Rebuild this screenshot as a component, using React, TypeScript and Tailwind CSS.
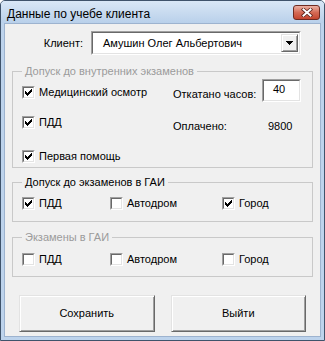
import type { ReactNode } from 'react'

// classic 7x7 tick, pixel by pixel
const TICK: [number, number][] = [
  [6, 0],
  [5, 1], [6, 1],
  [0, 2], [4, 2], [5, 2], [6, 2],
  [0, 3], [1, 3], [3, 3], [4, 3], [5, 3],
  [0, 4], [1, 4], [2, 4], [3, 4], [4, 4],
  [1, 5], [2, 5], [3, 5],
  [2, 6],
]

function Tick() {
  return (
    <svg width="7" height="7" viewBox="0 0 7 7" shapeRendering="crispEdges">
      {TICK.map(([x, y]) => (
        <rect key={`${x}-${y}`} x={x} y={y} width="1" height="1" fill="#000" />
      ))}
    </svg>
  )
}

function Check({ checked, label }: { checked?: boolean; label: string }) {
  return (
    <label className="flex items-center gap-[4px] h-[14px] leading-[14px]">
      <span className="w-[13px] h-[13px] shrink-0 border border-t-[#a0a0a0] border-l-[#a0a0a0] border-r-white border-b-white">
        <span className="flex items-center justify-center w-full h-full bg-white border border-t-[#696969] border-l-[#696969] border-r-[#e3e3e3] border-b-[#e3e3e3]">
          {checked && <Tick />}
        </span>
      </span>
      <span>{label}</span>
    </label>
  )
}

function Group({
  title,
  disabled,
  className,
  children,
}: {
  title: string
  disabled?: boolean
  className?: string
  children: ReactNode
}) {
  return (
    <fieldset className={`mx-[7px] border border-[#c9c9c9] ${className ?? ''}`}>
      <legend className={`ml-[9px] px-[3px] leading-[15px] ${disabled ? 'text-[#9b9b9b]' : 'text-black'}`}>
        {title}
      </legend>
      {children}
    </fieldset>
  )
}

function Button({ children }: { children: ReactNode }) {
  return (
    <button className="w-[136px] h-[37px] bg-[#f0f0f0] border border-t-[#e3e3e3] border-l-[#e3e3e3] border-r-[#696969] border-b-[#696969] shadow-[inset_1px_1px_#fff,inset_-1px_-1px_#a0a0a0]">
      {children}
    </button>
  )
}

export default function App() {
  return (
    <div className="w-[325px] h-[341px] flex flex-col overflow-hidden rounded-t-[5px] border border-[#3f536b] bg-[#bdd3ec] font-['Liberation_Sans',Arial,sans-serif] text-[11px] text-black">
      {/* Title bar */}
      <div className="h-[22px] shrink-0 flex items-start justify-between bg-gradient-to-b from-[#d9e7f6] to-[#b9d0ea]">
        <span className="ml-[6px] mt-[6px] text-[12px] leading-[15px]">Данные по учебе клиента</span>
        <button className="mt-[4px] mr-[4px] w-[27px] h-[15px] flex items-center justify-center rounded-[3px] border border-[#6e2b21] bg-gradient-to-b from-[#eab0a3] via-[#d46a55] to-[#c4452e]">
          <svg width="12" height="9" viewBox="0 0 12 9">
            <path d="M2.5 1.5L9.5 7.5M9.5 1.5L2.5 7.5" stroke="#5a2219" strokeWidth="3.6" strokeLinecap="square" />
            <path d="M2.5 1.5L9.5 7.5M9.5 1.5L2.5 7.5" stroke="#fff" strokeWidth="2" strokeLinecap="square" />
          </svg>
        </button>
      </div>

      {/* Client area */}
      <div className="flex-1 mx-[3px] mb-[3px] flex flex-col bg-[#f0f0f0] border border-[#9db3cf]">
        {/* Client combo */}
        <div className="mt-[7px] flex items-center">
          <span className="w-[86px] pr-[8px] text-right">Клиент:</span>
          <div className="w-[210px] h-[24px] flex items-center border border-t-[#a0a0a0] border-l-[#a0a0a0] border-r-white border-b-white">
            <div className="flex-1 h-full flex items-center bg-white border border-t-[#696969] border-l-[#696969] border-r-[#e3e3e3] border-b-[#e3e3e3]">
              <span className="flex-1 pl-[10px]">Амушин Олег Альбертович</span>
              <span className="mr-[1px] w-[17px] h-[18px] flex items-center justify-center bg-[#f0f0f0] border border-t-[#e3e3e3] border-l-[#e3e3e3] border-r-[#696969] border-b-[#696969] shadow-[inset_1px_1px_#fff,inset_-1px_-1px_#a0a0a0]">
                <svg width="7" height="4" viewBox="0 0 7 4" shapeRendering="crispEdges">
                  <path d="M0 0h7L3.5 4z" fill="#000" />
                </svg>
              </span>
            </div>
          </div>
        </div>

        {/* Internal exams */}
        <Group title="Допуск до внутренних экзаменов" disabled className="mt-[9px]">
          <div className="flex">
            <div className="w-[160px] pl-[9px] pt-[6px] pb-[4px] flex flex-col">
              <Check checked label="Медицинский осмотр" />
              <div className="mt-[16px]">
                <Check checked label="ПДД" />
              </div>
              <div className="mt-[20px]">
                <Check checked label="Первая помощь" />
              </div>
            </div>
            <div className="flex flex-col">
              <div className="flex items-start">
                <span className="w-[89px] mt-[8px] leading-[14px]">Откатано часов:</span>
                <div className="w-[39px] h-[23px] border border-t-[#a0a0a0] border-l-[#a0a0a0] border-r-white border-b-white">
                  <div className="h-full flex items-center pl-[9px] pb-[2px] bg-white border border-t-[#696969] border-l-[#696969] border-r-[#e3e3e3] border-b-[#e3e3e3]">
                    40
                  </div>
                </div>
              </div>
              <div className="mt-[17px] flex leading-[14px]">
                <span className="w-[95px]">Оплачено:</span>
                <span>9800</span>
              </div>
            </div>
          </div>
        </Group>

        {/* Traffic police admission */}
        <Group title="Допуск до экзаменов в ГАИ" className="mt-[7px]">
          <div className="pl-[9px] pt-[6px] pb-[11px] grid grid-cols-[88px_112px_1fr]">
            <Check checked label="ПДД" />
            <Check label="Автодром" />
            <Check checked label="Город" />
          </div>
        </Group>

        {/* Traffic police exams */}
        <Group title="Экзамены в ГАИ" disabled className="mt-[8px]">
          <div className="pl-[9px] pt-[7px] pb-[10px] grid grid-cols-[88px_112px_1fr]">
            <Check label="ПДД" />
            <Check label="Автодром" />
            <Check label="Город" />
          </div>
        </Group>

        <div className="mt-[18px] px-[14px] flex gap-[16px]">
          <Button>Сохранить</Button>
          <Button>Выйти</Button>
        </div>
      </div>
    </div>
  )
}
